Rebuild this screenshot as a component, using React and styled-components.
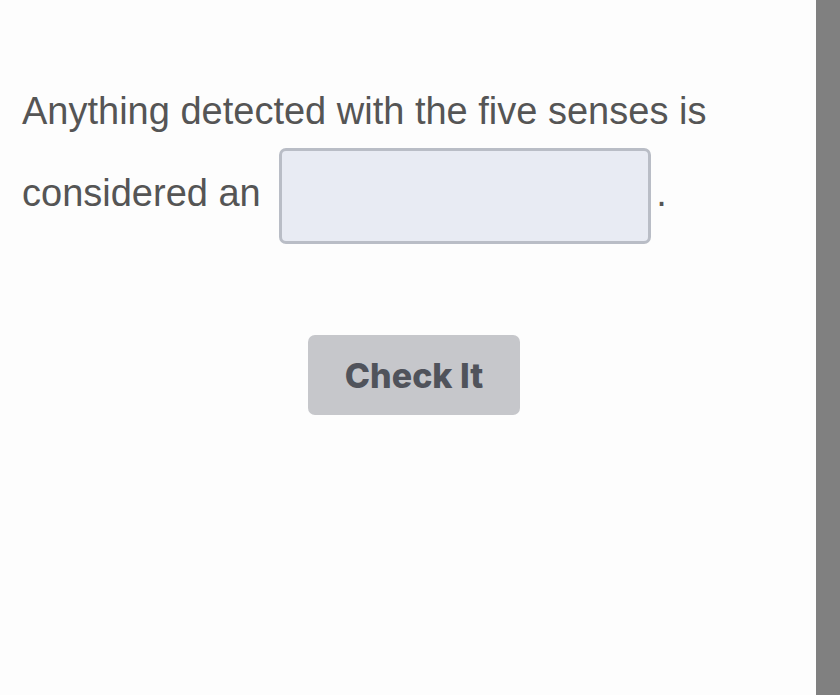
import React from "react";
import styled, { createGlobalStyle } from "styled-components";

const GlobalStyle = createGlobalStyle`
  html, body {
    margin: 0;
    padding: 0;
    height: 100%;
    overflow: hidden;
    background: #fdfdfd;
  }
`;

const Page = styled.div`
  display: flex;
  height: 100vh;
  width: 100%;
`;

const Main = styled.main`
  flex: 1;
  padding: 83px 10px 0 22px;
  box-sizing: border-box;
`;

const Rail = styled.div`
  width: 24px;
  flex: none;
  background: #808080;
`;

const Question = styled.p`
  margin: 0;
  font-family: "Liberation Sans", Arial, sans-serif;
  font-size: 38px;
  line-height: 57px;
  color: #555555;
`;

const Blank = styled.input`
  box-sizing: border-box;
  width: 372px;
  height: 96px;
  margin: 8px 5px 8px 8px;
  vertical-align: middle;
  background: #e8ebf3;
  border: 3px solid #b9bdc6;
  border-radius: 7px;
  outline: none;
  font-family: "Liberation Sans", Arial, sans-serif;
  font-size: 32px;
  color: #444;
  padding: 0 12px;
`;

const Actions = styled.div`
  display: flex;
  justify-content: center;
  margin-top: 83px;
`;

const CheckButton = styled.button`
  width: 212px;
  height: 80px;
  padding: 0;
  border: none;
  border-radius: 7px;
  background: #c6c7cb;
  color: #50535b;
  font-family: Inter, "Liberation Sans", sans-serif;
  font-weight: 800;
  font-size: 34px;
  cursor: pointer;
`;

export default function App() {
  return (
    <>
      <GlobalStyle />
      <Page>
        <Main>
          <Question>
            Anything detected with the five senses is considered an{" "}
            <Blank type="text" aria-label="answer" />.
          </Question>
          <Actions>
            <CheckButton>Check It</CheckButton>
          </Actions>
        </Main>
        <Rail />
      </Page>
    </>
  );
}
